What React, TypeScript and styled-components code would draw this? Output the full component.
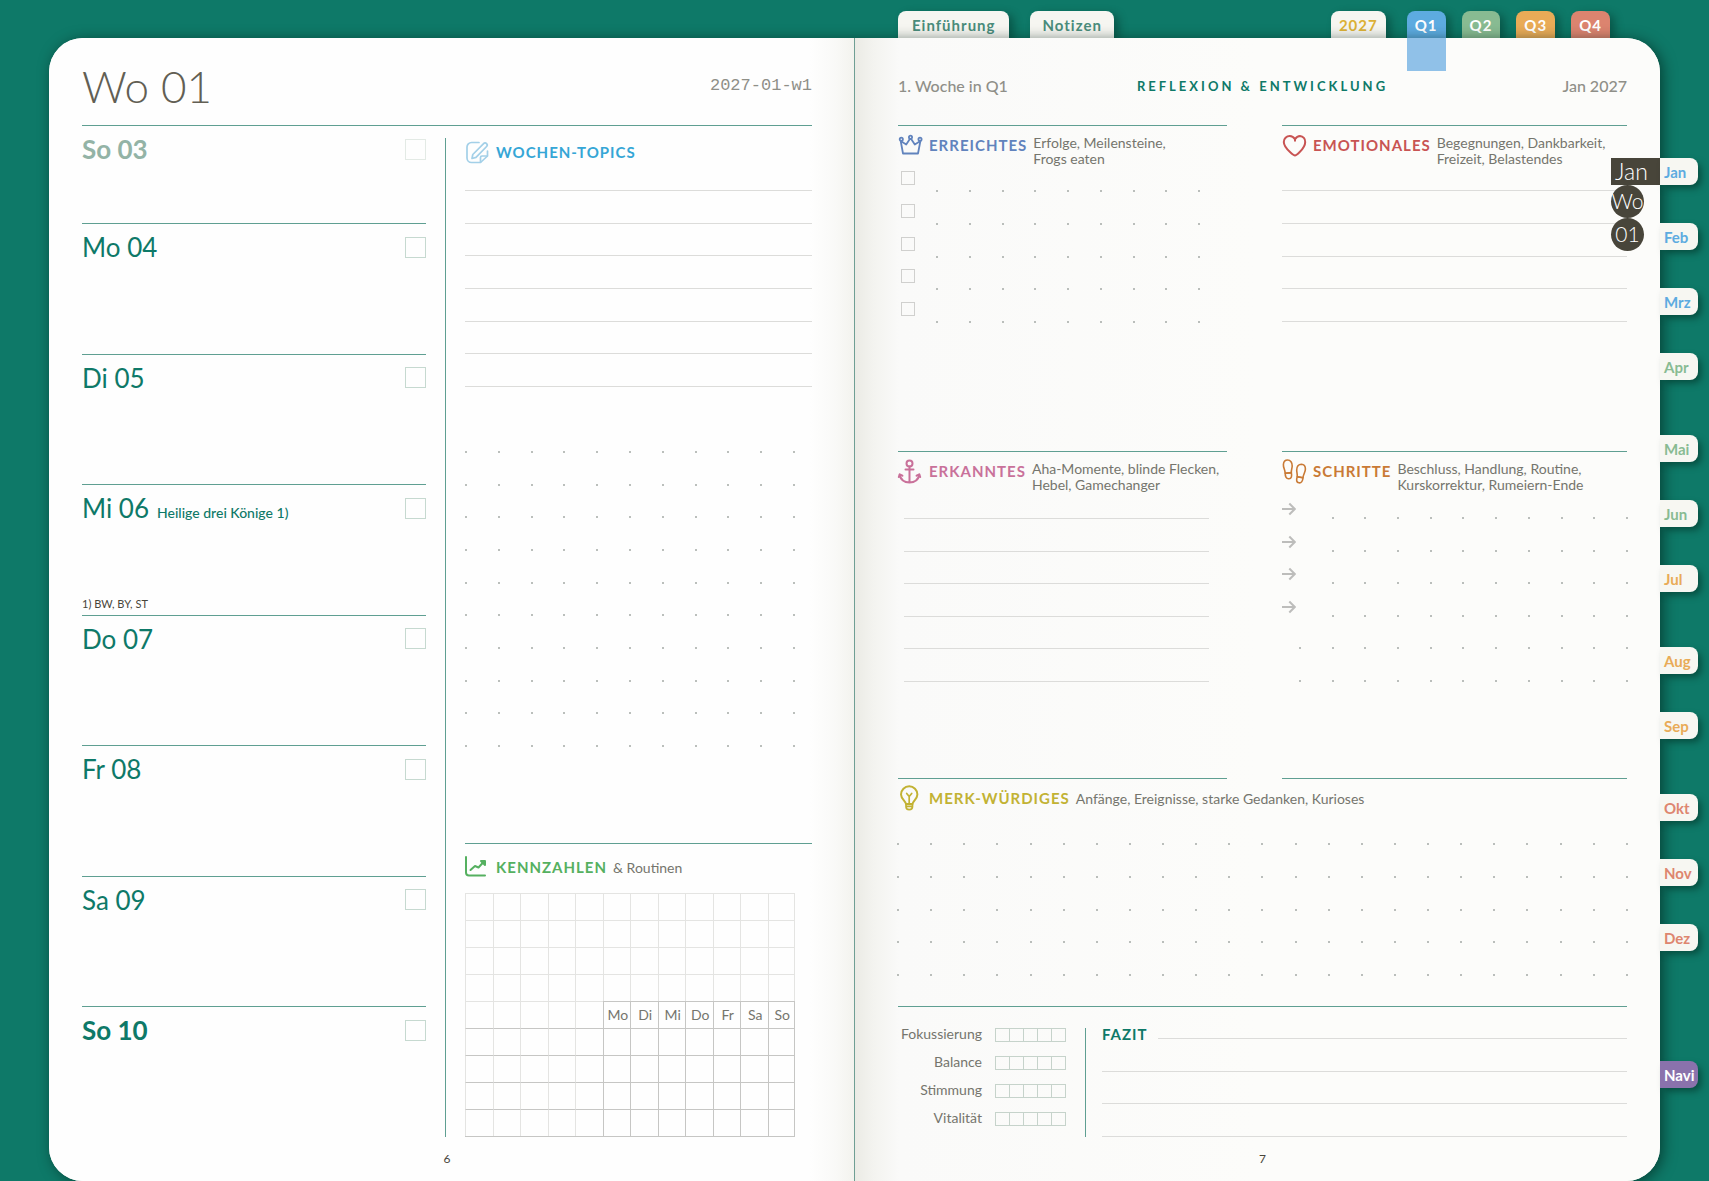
import React from "react";
import styled, { createGlobalStyle } from "styled-components";

const green = "#0e7968";
const rule = "#5f9f92";
const hair = "#dcdcda";
const ink = "#75756d";
const sans = `Lato, "Open Sans", sans-serif`;

/* Height taken by a number of rows on the planner's writing raster. */
const raster = (rows: number) => Math.round(((rows - 1) * 98) / 3) + 1;

const Global = createGlobalStyle`
  *, *::before, *::after { box-sizing: border-box; }
  html { background: ${green}; }
  body { margin: 0; font-family: ${sans}; color: ${ink}; font-size: 14px; }
  h1, h2, h3, p, ul, fieldset { margin: 0; padding: 0; border: 0; list-style: none; }
  a { text-decoration: none; }
`;

const Desk = styled.div`
  display: flex;
  flex-direction: column;
  min-height: 100vh;
  padding: 11px 0 0 49px;
  background: ${green};
  overflow: hidden;
`;

const TopTabs = styled.nav`
  display: flex;
  justify-content: space-between;
  width: calc(50% - 25px);
  margin-left: calc(50% - 25px);
  padding: 0 49px 0 44px;
`;

const TopGroup = styled.div<{ $gap: number }>`
  display: flex;
  gap: ${(p) => p.$gap}px;
`;

const TopTab = styled.a<{ $bg?: string; $fg?: string; $pad: number; $after?: number; $open?: string }>`
  position: relative;
  height: 27px;
  line-height: 28px;
  padding: 0 ${(p) => p.$pad}px;
  margin-right: ${(p) => p.$after ?? 0}px;
  border-radius: 8px 8px 0 0;
  background: ${(p) => p.$bg ?? "#f6f6f1"};
  color: ${(p) => p.$fg ?? "#fff"};
  font-size: 15px;
  font-weight: 700;
  letter-spacing: 1px;
  box-shadow: 5px 3px 8px rgba(0, 40, 30, 0.4);
  &::after {
    content: "";
    display: ${(p) => (p.$open ? "block" : "none")};
    position: absolute;
    z-index: 2;
    left: 0;
    right: 0;
    top: 27px;
    height: 33px;
    background: ${(p) => p.$open ?? "none"};
  }
`;

const Spread = styled.div`
  display: flex;
  flex: 1;
`;

const Book = styled.main`
  position: relative;
  z-index: 1;
  flex: 1;
  display: grid;
  grid-template-columns: minmax(0, 1fr) 1px minmax(0, 1fr);
  border-radius: 34px;
  background: #fdfdfb;
  box-shadow: 3px 2px 14px rgba(0, 30, 22, 0.6);
`;

const Spine = styled.div`
  background: #6f9f94;
`;

const Page = styled.section<{ $side: "left" | "right" }>`
  display: flex;
  flex-direction: column;
  padding: ${(p) => (p.$side === "left" ? "0 42px 0 33px" : "0 33px 0 43px")};
  border-radius: ${(p) => (p.$side === "left" ? "34px 0 0 34px" : "0 34px 34px 0")};
  background: ${(p) =>
    p.$side === "left"
      ? "linear-gradient(270deg, #f3f3ee 0, #f9f9f7 18px, #fefefe 44px)"
      : "linear-gradient(90deg, #ebebe5 0, #f3f3ef 18px, #fafaf9 44px, #fcfcfa 50%)"};
`;

const Masthead = styled.header<{ $ruled?: boolean }>`
  display: grid;
  grid-template-columns: 1fr auto 1fr;
  align-items: center;
  height: ${(p) => (p.$ruled ? 88 : 87)}px;
  padding-top: 9px;
  border-bottom: ${(p) => (p.$ruled ? `1px solid ${rule}` : "0")};
`;

const WeekTitle = styled.h1`
  font-size: 44px;
  line-height: 56px;
  font-weight: 300;
  color: #625f54;
`;

const Code = styled.span`
  grid-column: 3;
  justify-self: end;
  font-family: "Liberation Mono", monospace;
  font-size: 17px;
  line-height: 22px;
  color: #8f8f88;
`;

const Meta = styled.span<{ $end?: boolean }>`
  justify-self: ${(p) => (p.$end ? "end" : "start")};
  font-size: 16px;
  line-height: 22px;
  font-weight: 500;
  color: #8f8f88;
`;

const PageTitle = styled.h2`
  font-size: 13px;
  line-height: 22px;
  font-weight: 700;
  letter-spacing: 3px;
  color: ${green};
`;

const PageNumber = styled.footer`
  height: 44px;
  line-height: 44px;
  text-align: center;
  font-size: 12px;
  color: #48453a;
`;

const WeekGrid = styled.div`
  flex: 1;
  display: grid;
  grid-template-columns: minmax(0, 344fr) 1px minmax(0, 347fr);
  column-gap: 19px;
`;

const Divider = styled.div<{ $top?: number }>`
  width: 1px;
  margin-top: ${(p) => p.$top ?? 0}px;
  background: ${rule};
`;

const Days = styled.div`
  display: grid;
  grid-template-rows: 97px repeat(7, minmax(110px, 1fr));
`;

const Day = styled.article`
  display: flex;
  flex-direction: column;
  justify-content: space-between;
  & + & {
    border-top: 1px solid ${rule};
  }
`;

const DayHead = styled.label<{ $weight: number; $color: string }>`
  display: flex;
  align-items: baseline;
  gap: 8px;
  padding-top: 8px;
  font-size: 26px;
  line-height: 30px;
  font-weight: ${(p) => p.$weight};
  color: ${(p) => p.$color};
`;

const Holiday = styled.span`
  font-size: 14px;
  line-height: 16px;
  font-weight: 500;
`;

const Box = styled.input<{ $size: number; $line: string }>`
  appearance: none;
  width: ${(p) => p.$size}px;
  height: ${(p) => p.$size}px;
  margin: 0;
  border: 1px solid ${(p) => p.$line};
  background: transparent;
  &:checked {
    background: ${(p) => p.$line};
  }
`;

const DayBox = styled(Box)`
  margin-left: auto;
  align-self: center;
`;

const Footnote = styled.small`
  font-size: 11px;
  line-height: 14px;
  padding-bottom: 4px;
  color: #48453a;
`;

const Column = styled.div`
  display: flex;
  flex-direction: column;
  justify-content: space-between;
`;

const Section = styled.section<{ $ruled?: boolean; $closed?: boolean }>`
  border-top: ${(p) => (p.$ruled ? `1px solid ${rule}` : "0")};
  border-bottom: ${(p) => (p.$closed ? `1px solid ${rule}` : "0")};
`;

const Head = styled.header<{ $top: number; $height: number }>`
  display: flex;
  gap: 7px;
  height: ${(p) => p.$height}px;
  padding-top: ${(p) => p.$top}px;
`;

const Glyph = styled.svg`
  flex: none;
  width: 24px;
  height: 24px;
  fill: none;
  stroke: currentColor;
  stroke-width: 2;
  stroke-linecap: round;
  stroke-linejoin: round;
`;

const IconCell = styled.span<{ $color: string }>`
  display: flex;
  color: ${(p) => p.$color};
`;

const Words = styled.div<{ $inline?: boolean }>`
  display: flex;
  align-items: ${(p) => (p.$inline ? "baseline" : "flex-start")};
  gap: 6px;
  padding-top: 2px;
`;

const SectionTitle = styled.h3<{ $color: string }>`
  font-size: 15px;
  line-height: 20px;
  font-weight: 700;
  letter-spacing: 1px;
  color: ${(p) => p.$color};
`;

const Note = styled.p`
  font-size: 14px;
  line-height: 16px;
  white-space: pre-line;
`;

const Lines = styled.div<{ $rows: number; $inset?: string }>`
  display: flex;
  flex-direction: column;
  justify-content: space-between;
  height: ${(p) => raster(p.$rows)}px;
  margin: ${(p) => p.$inset ?? "0"};
`;

const Line = styled.div`
  height: 1px;
  background: ${hair};
`;

const Dots = styled.div<{ $rows: number; $inset?: string }>`
  flex: 1;
  display: flex;
  flex-direction: column;
  justify-content: space-between;
  height: ${(p) => raster(p.$rows) + 1}px;
  margin: ${(p) => p.$inset ?? "0"};
`;

const DotRow = styled.div`
  display: flex;
  justify-content: space-between;
`;

const Dot = styled.i<{ $off?: boolean }>`
  width: 2px;
  height: 2px;
  border-radius: 1px;
  background: ${(p) => (p.$off ? "transparent" : "#a4aaa6")};
`;

const Marked = styled.div<{ $pad: string; $gap: number }>`
  display: flex;
  align-items: flex-start;
  gap: ${(p) => p.$gap}px;
  padding: ${(p) => p.$pad};
`;

const Marks = styled.div<{ $rows: number }>`
  display: flex;
  flex-direction: column;
  justify-content: space-between;
  height: ${(p) => raster(p.$rows) + 13}px;
  color: #bdbdbb;
`;

const Arrow = styled.svg`
  width: 14px;
  height: 14px;
  fill: none;
  stroke: currentColor;
  stroke-width: 2;
`;

const TableWrap = styled.div`
  padding-right: 17px;
`;

const Tracker = styled.table`
  width: 100%;
  table-layout: fixed;
  border-collapse: separate;
  border-spacing: 0;
  border-bottom: 1px solid #c6c6c4;
`;

const light = "#e4e4e2";
const dark = "#c6c6c4";

const Cell = styled.td<{ $t: string; $l: string; $last: boolean }>`
  height: 27px;
  padding: 0 0 0 2px;
  border-top: 1px solid ${(p) => p.$t};
  border-left: 1px solid ${(p) => p.$l};
  border-right: ${(p) => (p.$last ? `1px solid ${p.$l}` : "0")};
  font-size: 14px;
  line-height: 20px;
  font-weight: 400;
  text-align: center;
`;

const Reflection = styled.div`
  flex: 1;
  display: grid;
  grid-template-columns: minmax(0, 329fr) minmax(0, 345fr);
  grid-template-rows: 326px 328px 227px minmax(131px, 1fr);
  column-gap: 55px;
`;

const Wide = styled(Section)`
  grid-column: 1 / -1;
`;

const Closing = styled(Wide)`
  display: flex;
  padding-top: 21px;
`;

const Ratings = styled.div`
  display: flex;
  flex-direction: column;
  gap: 14px;
  margin-right: 19px;
`;

const Rating = styled.fieldset`
  display: grid;
  grid-template-columns: 84px 71px;
  column-gap: 13px;
  height: 14px;
`;

const RatingName = styled.span`
  text-align: right;
  font-size: 14px;
  line-height: 12px;
`;

const Scale = styled.div`
  display: flex;
  border-left: 1px solid #c6d3cb;
`;

const Step = styled.input`
  appearance: none;
  flex: 1;
  height: 14px;
  margin: 0;
  border: 1px solid #c6d3cb;
  border-left: 0;
  &:checked {
    background: #c6d3cb;
  }
`;

const Fazit = styled.div`
  flex: 1;
  display: flex;
  flex-direction: column;
  margin-left: 16px;
`;

const FazitTop = styled.div`
  display: flex;
  align-items: flex-end;
  gap: 10px;
  height: 11px;
  & > ${Line} {
    flex: 1;
  }
`;

const FazitTitle = styled(SectionTitle)`
  line-height: 10px;
`;

const FazitLines = styled.div`
  flex: 1;
  display: grid;
  grid-auto-rows: 1fr;
  align-items: end;
`;

const SideTabs = styled.nav`
  position: relative;
  z-index: 2;
  width: 49px;
  padding-top: 120px;
`;

const SideGroup = styled.div<{ $after: number }>`
  display: flex;
  flex-direction: column;
  gap: 38px;
  margin-bottom: ${(p) => p.$after}px;
`;

const SideTab = styled.a<{ $fg: string; $bg?: string }>`
  width: 38px;
  height: 27px;
  padding-left: 4px;
  line-height: 28px;
  border-radius: 0 8px 8px 0;
  background: ${(p) => p.$bg ?? "#f7f7f2"};
  color: ${(p) => p.$fg};
  font-size: 15px;
  font-weight: 700;
  white-space: nowrap;
  box-shadow: 4px 4px 7px -1px rgba(0, 40, 30, 0.55);
`;

/* Bookmark stack that marks month and week on the page edge. */
const Marker = styled.div`
  position: absolute;
  top: 120px;
  right: 0;
  width: 49px;
  color: #fff;
  font-size: 21px;
  font-weight: 300;
`;

const MonthFlag = styled.div`
  height: 27px;
  padding-left: 4px;
  font-size: 23px;
  line-height: 27px;
  background: #48453a;
`;

const WeekDisc = styled.div`
  width: 33px;
  height: 33px;
  line-height: 32px;
  border-radius: 50%;
  text-align: center;
  background: #48453a;
`;

const icons: Record<string, React.ReactNode> = {
  note: (
    <g strokeWidth="1.7">
      <path d="M14 2.500H6.500A4.500 4.500 0 0 0 2 7V18a4.500 4.500 0 0 0 4.500 4.500H15.500L22.500 16V11" />
      <path d="M15.500 22.200V17.500a1.500 1.500 0 0 1 1.500-1.500h5.300" />
      <path d="M7 18.500l.8-4L18.600 3.600a2 2 0 0 1 3 2.900L11 17.400z" />
    </g>
  ),
  crown: (
    <g strokeWidth="1.8">
      <path d="M5 20.500h15l2.400-12.500-5.600 3.500L12.500 5 8.200 11.500 2.700 8z" />
      <circle cx="3.300" cy="6.300" r="1.600" fill="#fbfbfa" />
      <circle cx="12.500" cy="4.300" r="1.600" fill="#fbfbfa" />
      <circle cx="22" cy="6.300" r="1.600" fill="#fbfbfa" />
    </g>
  ),
  heart: <path d="M13 22.500c-1 0-2.300-1-5-3.500C4 15.300 1.800 12.800 1.800 9a6 6 0 0 1 6-6c2.200 0 3.800 1 5.200 3.200C14.400 4 16 3 18 3a5.600 5.600 0 0 1 5.200 6c0 3.800-1.700 6.300-5.500 10-2.500 2.500-3.700 3.500-4.700 3.500zM13 6.200v1.600" />,
  anchor: (
    <g>
      <circle cx="11.500" cy="4.500" r="3" />
      <path d="M11.500 7.500V23M7.500 10.500h8M1.500 15.500C2.500 20 6 23.500 11.500 23.500S20.500 20 21.500 15.500M.8 18l.9-2.700 2.700 1.400M22.200 18l-.9-2.700-2.700 1.400" />
    </g>
  ),
  shoes: (
    <g strokeWidth="1.6">
      <path d="M3.200 14.200C3 10 1.200 9 1.400 5.500 1.600 2.500 3.400 1 5.600 1c2.800 0 4.800 2.500 4.600 6-.1 2.500-1 4-.9 6.700z" />
      <path d="M3.200 14.200l6.100-.6c.8 3.600.2 6-2.400 6.200-2.600.2-3.700-2-3.700-5.600z" />
      <path d="M21 18.700c.4-4 2.400-5.200 2.400-8.700 0-3-1.700-4.700-4-4.800-2.900 0-4.700 2.300-4.700 5.800 0 2.600.8 4 .5 6.700z" />
      <path d="M21 18.700l-5.800-1c-1.100 3.500-.7 5.900 1.700 6.100 2.600.3 3.800-1.700 4.100-5.100z" />
    </g>
  ),
  bulb: (
    <g>
      <path d="M8 18c0-2.500-5-5-5-9.500a8.200 8.200 0 0 1 16.400 0C19.400 13 14.500 15.500 14.500 18z" />
      <path d="M8 18v2.500c0 2 1.500 3.200 3.200 3.200s3.300-1.200 3.300-3.200V18M8.200 20.300h6.100M11.200 17.500v-7M8.700 7.500l2.500 3 2.500-3" strokeWidth="1.700" />
    </g>
  ),
  chart: (
    <g>
      <path d="M1 2v15.500a3 3 0 0 0 3 3h16" />
      <path d="M5.500 15l4.500-4 3.500 1.500L18.500 7" />
      <path d="M16 6h4v4z" fill="currentColor" />
    </g>
  ),
};

const Icon = ({ name, color }: { name: string; color: string }) => (
  <IconCell $color={color}>
    <Glyph viewBox="0 0 24 24" overflow="visible" aria-hidden="true">
      {icons[name]}
    </Glyph>
  </IconCell>
);

type HeadingProps = { icon: string; color: string; tint?: string; title: string; note?: string; inline?: boolean; top?: number; height?: number };

const Heading = ({ icon, color, tint, title, note, inline, top = 7, height = 64 }: HeadingProps) => (
  <Head $top={top} $height={height}>
    <Icon name={icon} color={tint ?? color} />
    <Words $inline={inline}>
      <SectionTitle $color={color}>{title}</SectionTitle>
      {note && <Note>{note}</Note>}
    </Words>
  </Head>
);

const Ruled = ({ rows, inset }: { rows: number; inset?: string }) => (
  <Lines $rows={rows} $inset={inset}>
    {Array.from({ length: rows }, (_, i) => (
      <Line key={i} />
    ))}
  </Lines>
);

const DotGrid = ({ rows, cols, inset, shortRows = 0 }: { rows: number; cols: number; inset?: string; shortRows?: number }) => (
  <Dots $rows={rows} $inset={inset}>
    {Array.from({ length: rows }, (_, r) => (
      <DotRow key={r}>
        {Array.from({ length: cols }, (_, c) => (
          <Dot key={c} $off={r < shortRows && c === 0} />
        ))}
      </DotRow>
    ))}
  </Dots>
);

const days = [
  { name: "So 03", weight: 700, color: "#93b3a6", line: "#e3eae5" },
  { name: "Mo 04" },
  { name: "Di 05" },
  { name: "Mi 06", holiday: "Heilige drei Könige 1)", foot: "1) BW, BY, ST" },
  { name: "Do 07" },
  { name: "Fr 08" },
  { name: "Sa 09" },
  { name: "So 10", weight: 700 },
];

const weekdays = ["Mo", "Di", "Mi", "Do", "Fr", "Sa", "So"];

const blue = "#5dabe0";
const leaf = "#88bb92";
const amber = "#e9ab57";
const coral = "#de866f";

const sideGroups = [
  { after: 55, tabs: [["Jan", blue], ["Feb", blue], ["Mrz", blue], ["Apr", leaf]] },
  { after: 55, tabs: [["Mai", leaf], ["Jun", leaf], ["Jul", amber]] },
  { after: 55, tabs: [["Aug", amber], ["Sep", amber]] },
  { after: 110, tabs: [["Okt", coral], ["Nov", coral], ["Dez", coral]] },
];

const TrackerTable = () => (
  <Tracker aria-label="Kennzahlen">
    <tbody>
      {Array.from({ length: 9 }, (_, r) => (
        <tr key={r}>
          {Array.from({ length: 12 }, (_, c) => {
            const heading = r === 4 && c >= 5;
            return (
              <Cell
                key={c}
                as={heading ? "th" : "td"}
                $t={r > 4 || heading ? dark : light}
                $l={r >= 4 && c >= 5 ? dark : light}
                $last={c === 11}
              >
                {heading ? weekdays[c - 5] : null}
              </Cell>
            );
          })}
        </tr>
      ))}
    </tbody>
  </Tracker>
);

export default function App() {
  return (
    <Desk>
      <Global />
      <TopTabs>
        <TopGroup $gap={21}>
          <TopTab href="#intro" $pad={14} $fg="#4a8c7b">Einführung</TopTab>
          <TopTab href="#notes" $pad={12} $fg="#4a8c7b">Notizen</TopTab>
        </TopGroup>
        <TopGroup $gap={16}>
          <TopTab href="#year" $pad={8} $after={5} $fg="#dcb135">2027</TopTab>
          <TopTab href="#q1" $pad={8} $bg="#5dabe0" $open="#90c1e8">Q1</TopTab>
          <TopTab href="#q2" $pad={8} $bg="#88bb92">Q2</TopTab>
          <TopTab href="#q3" $pad={8} $bg="#e9ab57">Q3</TopTab>
          <TopTab href="#q4" $pad={8} $bg="#dc846f">Q4</TopTab>
        </TopGroup>
      </TopTabs>
      <Spread>
        <Book>
          <Page $side="left">
            <Masthead $ruled>
              <WeekTitle>Wo 01</WeekTitle>
              <Code>2027-01-w1</Code>
            </Masthead>
            <WeekGrid>
              <Days>
                {days.map((d) => (
                  <Day key={d.name}>
                    <DayHead $weight={d.weight ?? 400} $color={d.color ?? green}>
                      {d.name}
                      {d.holiday && <Holiday>{d.holiday}</Holiday>}
                      <DayBox type="checkbox" $size={21} $line={d.line ?? "#c6d9d0"} />
                    </DayHead>
                    {d.foot && <Footnote>{d.foot}</Footnote>}
                  </Day>
                ))}
              </Days>
              <Divider $top={12} />
              <Column>
                <Section>
                  <Heading icon="note" color="#35a6d6" tint="#a3d0e8" title="WOCHEN-TOPICS" top={14} />
                  <Ruled rows={7} />
                  <DotGrid rows={10} cols={11} inset="64px 17px 0 0" />
                </Section>
                <Section $ruled>
                  <Heading icon="chart" color="#55b060" title="KENNZAHLEN" note="& Routinen" inline top={11} height={49} />
                  <TableWrap>
                    <TrackerTable />
                  </TableWrap>
                </Section>
              </Column>
            </WeekGrid>
            <PageNumber>6</PageNumber>
          </Page>
          <Spine />
          <Page $side="right">
            <Masthead>
              <Meta>1. Woche in Q1</Meta>
              <PageTitle>REFLEXION &amp; ENTWICKLUNG</PageTitle>
              <Meta $end>Jan 2027</Meta>
            </Masthead>
            <Reflection>
              <Section $ruled>
                <Heading icon="crown" color="#6183bd" title="ERREICHTES" note={"Erfolge, Meilensteine,\nFrogs eaten"} height={45} />
                <Marked $pad="0 27px 0 3px" $gap={21}>
                  <Marks $rows={5}>
                    {[1, 2, 3, 4, 5].map((n) => (
                      <Box key={n} type="checkbox" aria-label={`Erreichtes ${n}`} $size={14} $line="#d0d0ce" />
                    ))}
                  </Marks>
                  <DotGrid rows={5} cols={9} inset="19px 0 0" />
                </Marked>
              </Section>
              <Section $ruled>
                <Heading icon="heart" color="#c85453" title="EMOTIONALES" note={"Begegnungen, Dankbarkeit,\nFreizeit, Belastendes"} />
                <Ruled rows={5} />
              </Section>
              <Section $ruled $closed>
                <Heading icon="anchor" color="#c9719a" title="ERKANNTES" note={"Aha-Momente, blinde Flecken,\nHebel, Gamechanger"} height={66} />
                <Ruled rows={6} inset="0 18px 0 6px" />
              </Section>
              <Section $ruled $closed>
                <Heading icon="shoes" color="#c97a35" title="SCHRITTE" note={"Beschluss, Handlung, Routine,\nKurskorrektur, Rumeiern-Ende"} height={50} />
                <Marked $pad="0" $gap={3}>
                  <Marks $rows={4}>
                    {[1, 2, 3, 4].map((n) => (
                      <Arrow key={n} viewBox="0 0 14 14" aria-hidden="true">
                        <path d="M0 7h12.500M7.300 1.500L12.800 7l-5.500 5.500" />
                      </Arrow>
                    ))}
                  </Marks>
                  <DotGrid rows={6} cols={11} shortRows={4} inset="15px -1px 0 0" />
                </Marked>
              </Section>
              <Wide>
                <Heading icon="bulb" color="#c2b233" title="MERK-WÜRDIGES" note="Anfänge, Ereignisse, starke Gedanken, Kurioses" inline />
                <DotGrid rows={5} cols={23} inset="0 -1px" />
              </Wide>
              <Closing $ruled>
                <Ratings>
                  {["Fokussierung", "Balance", "Stimmung", "Vitalität"].map((name) => (
                    <Rating key={name} aria-label={name}>
                      <RatingName>{name}</RatingName>
                      <Scale>
                        {[1, 2, 3, 4, 5].map((n) => (
                          <Step key={n} type="radio" name={name} value={n} aria-label={`${name} ${n}`} />
                        ))}
                      </Scale>
                    </Rating>
                  ))}
                </Ratings>
                <Divider />
                <Fazit>
                  <FazitTop>
                    <FazitTitle $color={green}>FAZIT</FazitTitle>
                    <Line />
                  </FazitTop>
                  <FazitLines>
                    <Line />
                    <Line />
                    <Line />
                  </FazitLines>
                </Fazit>
              </Closing>
            </Reflection>
            <PageNumber>7</PageNumber>
          </Page>
          <Marker>
            <MonthFlag>Jan</MonthFlag>
            <WeekDisc>Wo</WeekDisc>
            <WeekDisc>01</WeekDisc>
          </Marker>
        </Book>
        <SideTabs>
          {sideGroups.map((g, i) => (
            <SideGroup key={i} $after={g.after}>
              {g.tabs.map(([name, color]) => (
                <SideTab key={name} href={`#${name}`} $fg={color}>
                  {name}
                </SideTab>
              ))}
            </SideGroup>
          ))}
          <SideGroup $after={0}>
            <SideTab href="#navi" $fg="#fff" $bg="#8a72ac">Navi</SideTab>
          </SideGroup>
        </SideTabs>
      </Spread>
    </Desk>
  );
}
